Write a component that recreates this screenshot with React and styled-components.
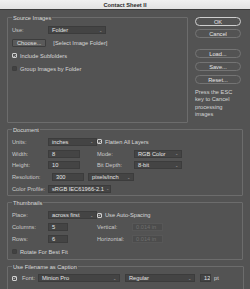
import React from 'react';
import styled, { createGlobalStyle } from 'styled-components';

const GlobalStyle = createGlobalStyle`
  html, body {
    margin: 0;
    padding: 0;
    background: #535353;
  }
  body {
    font-family: "Liberation Sans", Arial, sans-serif;
  }
`

const Window = styled.div`
  width: 250px;
  height: 289px;
  overflow: hidden;
  background: #535353;
  color: #d8d8d8;
  font-size: 5.7px;
  display: flex;
  flex-direction: column;
`

const TitleBar = styled.div`
  height: 10px;
  flex: none;
  background: linear-gradient(#f0f0f0, #e2e2e2);
  color: #2b2b2b;
  font-weight: bold;
  font-size: 5.7px;
  display: flex;
  align-items: center;
  justify-content: center;
  border-bottom: 1px solid #3b3b3b;
  box-sizing: border-box;
`

const Body = styled.div`
  padding: 7px 0 0 7px;
  display: flex;
  flex-direction: column;
  gap: 6px;
`

const TopRow = styled.div`
  display: flex;
  gap: 7px;
`

const Group = styled.div`
  box-sizing: border-box;
  width: ${p => p.$w}px;
  height: ${p => p.$h}px;
  border: 1px solid #6c6c6c;
  border-radius: 1px;
  padding: 0 4px;
  display: flex;
  flex-direction: column;
`

const GroupTitle = styled.div`
  margin-top: -3px;
  width: fit-content;
  padding: 0 1px;
  background: #535353;
  color: #dcdcdc;
  line-height: 7px;
`

const Row = styled.div`
  height: ${p => p.$h || 12}px;
  display: flex;
  align-items: center;
  gap: ${p => p.$gap || 0}px;
`

const Label = styled.span`
  width: ${p => p.$w || 36}px;
  flex: none;
  color: #c9c9c9;
  white-space: nowrap;
`

const Field = styled.div`
  box-sizing: border-box;
  width: ${p => p.$w}px;
  height: 8px;
  flex: none;
  background: ${p => (p.$disabled ? '#4c4c4c' : '#444444')};
  border: 1px solid ${p => (p.$disabled ? '#575757' : '#3c3c3c')};
  color: ${p => (p.$disabled ? '#6f6f6f' : '#e4e4e4')};
  padding: 0 3px;
  display: flex;
  align-items: center;
  justify-content: space-between;
  white-space: nowrap;
  overflow: hidden;
`

const Chevron = styled.span`
  color: #a8a8a8;
  font-size: 4px;
  margin-left: 2px;
`

const Select = ({ w, children }) => (
  <Field $w={w}>
    <span>{children}</span>
    <Chevron>⌄</Chevron>
  </Field>
)

const Box = styled.span`
  box-sizing: border-box;
  width: 5px;
  height: 5px;
  flex: none;
  border: 1px solid ${p => (p.$on ? '#cfcfcf' : '#3e3e3e')};
  background: ${p => (p.$on ? '#535353' : '#414141')};
  border-radius: 1px;
  display: flex;
  align-items: center;
  justify-content: center;
`

const Tick = () => (
  <svg width="4" height="4" viewBox="0 0 4 4">
    <path d="M0.5 2 L1.6 3.1 L3.5 0.8" stroke="#e0e0e0" strokeWidth="0.8" fill="none" />
  </svg>
)

const Check = ({ on, h = 13, children }) => (
  <Row $h={h} $gap={3}>
    <Box $on={on}>{on && <Tick />}</Box>
    <span>{children}</span>
  </Row>
)

const SmallButton = styled.div`
  box-sizing: border-box;
  height: 8px;
  padding: 0 4px;
  border: 1px solid #3d3d3d;
  background: #5a5a5a;
  border-radius: 1px;
  display: flex;
  align-items: center;
  color: #e0e0e0;
`

const Side = styled.div`
  width: 46px;
  display: flex;
  flex-direction: column;
`

const PillButton = styled.div`
  box-sizing: border-box;
  height: 9px;
  margin-bottom: ${p => p.$mb || 4}px;
  border: 1px solid ${p => (p.$primary ? '#cfcfcf' : '#747474')};
  border-radius: 5px;
  display: flex;
  align-items: center;
  justify-content: center;
  color: #e6e6e6;
`

const Note = styled.div`
  margin-top: 1px;
  line-height: 7.4px;
  color: #d4d4d4;
`

const TwoCol = styled.div`
  display: grid;
  grid-template-columns: 85px 85px;
  margin-top: 2px;
`

const Col = styled.div`
  display: flex;
  flex-direction: column;
`

const Spacer = styled.div`
  height: ${p => p.$h}px;
`

const Text = styled.span`
  margin-left: ${p => p.$ml || 0}px;
  color: ${p => p.$c || '#d8d8d8'};
`

export default function App() {
  return (
    <>
      <GlobalStyle />
      <Window>
        <TitleBar>Contact Sheet II</TitleBar>
        <Body>
          <TopRow>
            <Group $w={181} $h={106}>
              <GroupTitle>Source Images</GroupTitle>
              <Spacer $h={2} />
              <Row $h={12}>
                <Label>Use:</Label>
                <Select w={58}>Folder</Select>
              </Row>
              <Row $h={13} $gap={7}>
                <SmallButton>Choose...</SmallButton>
                <span>[Select Image Folder]</span>
              </Row>
              <Check on>Include Subfolders</Check>
              <Check>Group Images by Folder</Check>
            </Group>
            <Side>
              <PillButton $primary $mb={3}>OK</PillButton>
              <PillButton $mb={11}>Cancel</PillButton>
              <PillButton>Load...</PillButton>
              <PillButton>Save...</PillButton>
              <PillButton>Reset...</PillButton>
              <Note>
                Press the ESC
                <br />
                key to Cancel
                <br />
                processing
                <br />
                images
              </Note>
            </Side>
          </TopRow>

          <Group $w={236} $h={67}>
            <GroupTitle>Document</GroupTitle>
            <TwoCol>
              <Col>
                <Row $h={11.75}>
                  <Label>Units:</Label>
                  <Select w={49}>inches</Select>
                </Row>
                <Row $h={11.75}>
                  <Label>Width:</Label>
                  <Field $w={32}>8</Field>
                </Row>
                <Row $h={11.75}>
                  <Label>Height:</Label>
                  <Field $w={32}>10</Field>
                </Row>
                <Row $h={11.75} $gap={4}>
                  <Label>Resolution:</Label>
                  <Field $w={32}>300</Field>
                  <Select w={46}>pixels/inch</Select>
                </Row>
                <Row $h={11.75}>
                  <Label>Color Profile:</Label>
                  <Select w={63}>sRGB IEC61966-2.1</Select>
                </Row>
              </Col>
              <Col>
                <Check on h={11.75}>Flatten All Layers</Check>
                <Row $h={11.75}>
                  <Label $w={37}>Mode:</Label>
                  <Select w={48}>RGB Color</Select>
                </Row>
                <Row $h={11.75}>
                  <Label $w={37}>Bit Depth:</Label>
                  <Select w={48}>8-bit</Select>
                </Row>
              </Col>
            </TwoCol>
          </Group>

          <Group $w={236} $h={58}>
            <GroupTitle>Thumbnails</GroupTitle>
            <TwoCol>
              <Col>
                <Row $h={12}>
                  <Label>Place:</Label>
                  <Select w={49}>across first</Select>
                </Row>
                <Row $h={12}>
                  <Label>Columns:</Label>
                  <Field $w={20}>5</Field>
                </Row>
                <Row $h={12}>
                  <Label>Rows:</Label>
                  <Field $w={20}>6</Field>
                </Row>
                <Check>Rotate For Best Fit</Check>
              </Col>
              <Col>
                <Check on h={12}>Use Auto-Spacing</Check>
                <Row $h={12}>
                  <Label $w={35}>Vertical:</Label>
                  <Field $w={31} $disabled>0.014 in</Field>
                </Row>
                <Row $h={12}>
                  <Label $w={35}>Horizontal:</Label>
                  <Field $w={31} $disabled>0.014 in</Field>
                </Row>
              </Col>
            </TwoCol>
          </Group>

          <Group $w={237} $h={30}>
            <GroupTitle>Use Filename as Caption</GroupTitle>
            <Row $h={14}>
              <Box $on><Tick /></Box>
              <Text $ml={5} $c="#c9c9c9">Font:</Text>
              <Text $ml={3} />
              <Select w={82}>Minion Pro</Select>
              <Text $ml={5} />
              <Select w={70}>Regular</Select>
              <Text $ml={5} />
              <Field $w={11}>12</Field>
              <Text $ml={3}>pt</Text>
            </Row>
          </Group>
        </Body>
      </Window>
    </>
  );
}
